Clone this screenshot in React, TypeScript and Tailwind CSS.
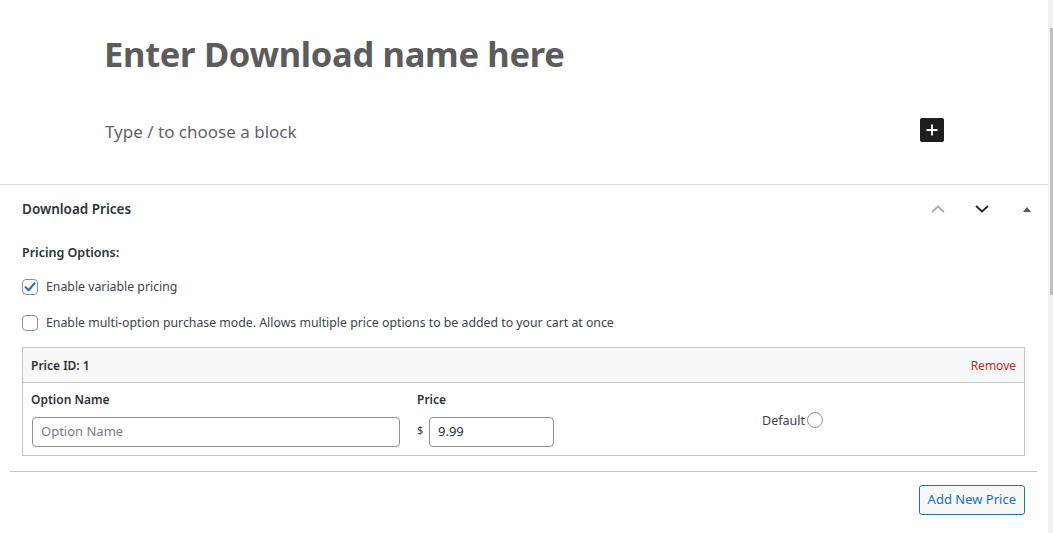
import React from 'react';

const font = { fontFamily: '"Noto Sans", "Open Sans", sans-serif' };

function Checkbox({ checked }: { checked?: boolean }) {
  return (
    <span className="w-[16px] h-[16px] rounded-[4px] border border-[#8c8f94] bg-white flex items-center justify-center shrink-0">
      {checked && (
        <svg width="14" height="14" viewBox="0 0 14 14">
          <path d="M2.6 7.2 L5.6 10.2 L11.4 3.4" fill="none" stroke="#2271b1" strokeWidth="2.2" strokeLinecap="round" strokeLinejoin="round" />
        </svg>
      )}
    </span>
  );
}

export default function App() {
  return (
    <div className="flex w-[1053px] h-[533px] overflow-hidden bg-white text-[#3c434a]" style={font}>
      <div className="flex-1 flex flex-col min-w-0">
        {/* editor area */}
        <div className="h-[185px] border-b border-[#dcdcde] pl-[105px] flex flex-col shrink-0">
          <h1 className="mt-[32px] text-[34.5px] leading-[44px] font-bold text-[#5c5c5c] tracking-[-0.3px] -ml-[1px]">
            Enter Download name here
          </h1>
          <div className="mt-[44px] flex items-center h-[24px] pr-[104px]">
            <span className="text-[17px] text-[#60646b]">Type / to choose a block</span>
            <span className="ml-auto w-[24px] h-[24px] rounded-[2px] bg-[#1e1e1e] flex items-center justify-center -mt-[5px]">
              <svg width="14" height="14" viewBox="0 0 14 14">
                <path d="M7 1.5v11M1.5 7h11" stroke="#fff" strokeWidth="1.8" />
              </svg>
            </span>
          </div>
        </div>

        {/* metabox */}
        <div className="flex flex-col">
          <div className="h-[48px] flex items-center pl-[22px]">
            <span className="text-[13.5px] font-semibold text-[#2c3338]">Download Prices</span>
            <div className="ml-auto flex items-center">
              <span className="w-[44px] flex justify-center">
                <svg width="16" height="10" viewBox="0 0 16 10">
                  <path d="M2 8 L8 2.5 L14 8" fill="none" stroke="#a7aaad" strokeWidth="1.8" />
                </svg>
              </span>
              <span className="w-[44px] flex justify-center">
                <svg width="16" height="10" viewBox="0 0 16 10">
                  <path d="M2 2 L8 7.5 L14 2" fill="none" stroke="#1d2327" strokeWidth="1.8" />
                </svg>
              </span>
              <span className="w-[44px] flex justify-center pl-[2px]">
                <svg width="10" height="8" viewBox="0 0 10 8">
                  <path d="M1 7 L5 2 L9 7 Z" fill="#50575e" />
                </svg>
              </span>
            </div>
          </div>

          <div className="pl-[22px] pr-[23px] flex flex-col">
            <div className="mt-[10px] h-[20px] leading-[20px] text-[12.5px] font-semibold text-[#2c3338]">Pricing Options:</div>
            <label className="mt-[14px] h-[20px] flex items-center gap-[8px] text-[12.3px]">
              <Checkbox checked />
              <span>Enable variable pricing</span>
            </label>
            <label className="mt-[16px] h-[20px] flex items-center gap-[8px] text-[12.3px]">
              <Checkbox />
              <span>Enable multi-option purchase mode. Allows multiple price options to be added to your cart at once</span>
            </label>

            <div className="mt-[14px] border border-[#c3c4c7] flex flex-col">
              <div className="h-[35px] bg-[#f6f7f7] border-b border-[#c3c4c7] flex items-center pl-[8px] pr-[8px] text-[12px]">
                <span className="font-semibold text-[#2c3338] mt-[1px]">Price ID: 1</span>
                <span className="ml-auto text-[#b32d2e] mt-[1px]">Remove</span>
              </div>
              <div className="flex pl-[8px] pt-[7px] pb-[8px] text-[12px]">
                <div className="flex flex-col w-[386px]">
                  <span className="h-[20px] leading-[20px] font-semibold text-[#2c3338]">Option Name</span>
                  <div className="mt-[7px] ml-[1px] w-[368px] h-[30px] rounded-[4px] border border-[#8c8f94] flex items-center px-[8px] text-[13px] text-[#787c82]">
                    Option Name
                  </div>
                </div>
                <div className="flex flex-col w-[345px]">
                  <span className="h-[20px] leading-[20px] font-semibold text-[#2c3338]">Price</span>
                  <div className="mt-[7px] flex items-center">
                    <span className="w-[12px] text-[11px] -mt-[4px]">$</span>
                    <div className="w-[125px] h-[30px] rounded-[4px] border border-[#8c8f94] flex items-center px-[8px] text-[13px] text-[#2c3338]">
                      9.99
                    </div>
                  </div>
                </div>
                <div className="flex items-center gap-[2px] h-[40px] mt-[11px] text-[12.5px]">
                  <span>Default</span>
                  <span className="w-[16px] h-[16px] rounded-full border border-[#8c8f94] -mt-[3px]" />
                </div>
              </div>
            </div>
          </div>

          <div className="mt-[15px] ml-[10px] mr-[11px] border-t border-[#c3c4c7]" />
          <div className="flex justify-end pr-[23px] mt-[13px]">
            <span className="h-[30px] px-[8px] rounded-[3px] border border-[#2271b1] bg-[#f6f7f7] text-[#2271b1] text-[13px] flex items-center">
              Add New Price
            </span>
          </div>
        </div>
      </div>

      {/* scrollbar */}
      <div className="w-[5px] bg-[#f0f0f0] flex flex-col">
        <div className="mt-[28px] h-[267px] w-[3px] ml-[2px] bg-[#c1c1c1]" />
      </div>
    </div>
  );
}
